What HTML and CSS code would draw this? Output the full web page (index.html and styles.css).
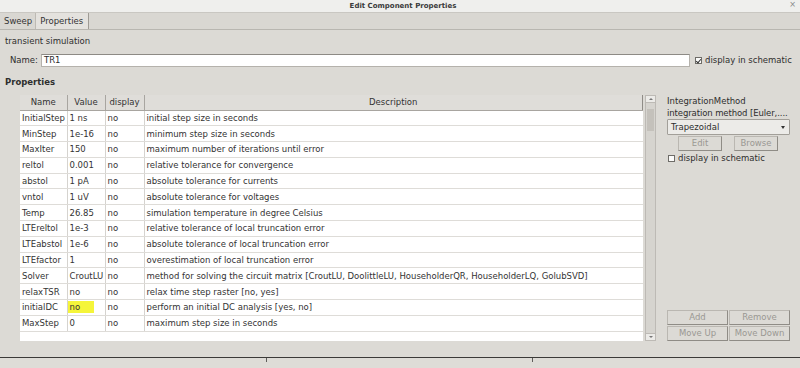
FILE: index.html
```html
<!DOCTYPE html>
<html>
<head>
<meta charset="utf-8">
<link rel="stylesheet" href="styles.css">
</head>
<body>
<div class="window">
  <div class="titlebar"><span class="title">Edit Component Properties</span><span class="close">×</span></div>
  <div class="tabs">
    <div class="tab">Sweep</div>
    <div class="tab active">Properties</div>
  </div>
  <div class="body">
    <div class="desc">transient simulation</div>
    <div class="namerow">
      <span class="lbl">Name:</span>
      <div class="input">TR1</div>
      <span class="chk checked"></span><span class="chklbl">display in schematic</span>
    </div>
    <div class="section">Properties</div>
    <div class="main">
      <div class="tablewrap">
        <table class="props">
          <thead>
            <tr><th class="c1">Name</th><th class="c2">Value</th><th class="c3">display</th><th class="c4">Description</th></tr>
          </thead>
          <tbody>
            <tr><td>InitialStep</td><td>1 ns</td><td>no</td><td>initial step size in seconds</td></tr>
            <tr><td>MinStep</td><td>1e-16</td><td>no</td><td>minimum step size in seconds</td></tr>
            <tr><td>MaxIter</td><td>150</td><td>no</td><td>maximum number of iterations until error</td></tr>
            <tr><td>reltol</td><td>0.001</td><td>no</td><td>relative tolerance for convergence</td></tr>
            <tr><td>abstol</td><td>1 pA</td><td>no</td><td>absolute tolerance for currents</td></tr>
            <tr><td>vntol</td><td>1 uV</td><td>no</td><td>absolute tolerance for voltages</td></tr>
            <tr><td>Temp</td><td>26.85</td><td>no</td><td>simulation temperature in degree Celsius</td></tr>
            <tr><td>LTEreltol</td><td>1e-3</td><td>no</td><td>relative tolerance of local truncation error</td></tr>
            <tr><td>LTEabstol</td><td>1e-6</td><td>no</td><td>absolute tolerance of local truncation error</td></tr>
            <tr><td>LTEfactor</td><td>1</td><td>no</td><td>overestimation of local truncation error</td></tr>
            <tr><td>Solver</td><td>CroutLU</td><td>no</td><td>method for solving the circuit matrix [CroutLU, DoolittleLU, HouseholderQR, HouseholderLQ, GolubSVD]</td></tr>
            <tr><td>relaxTSR</td><td>no</td><td>no</td><td>relax time step raster [no, yes]</td></tr>
            <tr><td>initialDC</td><td><span class="hl">no</span></td><td>no</td><td>perform an initial DC analysis [yes, no]</td></tr>
            <tr><td>MaxStep</td><td>0</td><td>no</td><td>maximum step size in seconds</td></tr>
          </tbody>
        </table>
      </div>
      <div class="vscroll">
        <div class="arrow up"></div>
        <div class="track"><div class="thumb"></div></div>
        <div class="arrow down"></div>
      </div>
      <div class="side">
        <div class="pname">IntegrationMethod</div>
        <div class="pdesc">integration method [Euler,....</div>
        <div class="combo"><span>Trapezoidal</span><span class="caret"></span></div>
        <div class="btnrow narrow">
          <div class="btn dis">Edit</div>
          <div class="btn dis">Browse</div>
        </div>
        <div class="sidechk"><span class="chk"></span><span class="chklbl">display in schematic</span></div>
        <div class="spacer"></div>
        <div class="btngrid">
          <div class="btn dis">Add</div>
          <div class="btn dis">Remove</div>
          <div class="btn dis">Move Up</div>
          <div class="btn dis">Move Down</div>
        </div>
      </div>
    </div>
  </div>
  <div class="bottom">
    <div class="bcell"></div>
    <div class="bcell"></div>
    <div class="bcell last"></div>
  </div>
</div>
</body>
</html>
```
FILE: styles.css
```css
* { box-sizing: border-box; }
html, body { margin: 0; padding: 0; }
body {
  width: 800px; height: 368px; overflow: hidden;
  font-family: "DejaVu Sans", sans-serif;
  font-size: 8px;
  color: #2e2e2e;
  background: #dcdad5;
}
.window { display: flex; flex-direction: column; height: 368px; }
.titlebar {
  height: 13px; background: #efefed; border-bottom: 1px solid #c9c7c2;
  display: flex; align-items: center; justify-content: center; position: relative;
}
.title { font-weight: bold; font-size: 7px; color: #3a3a3a; margin-left: 6px; }
.close { position: absolute; right: 4px; top: 0; font-size: 8px; color: #888; line-height: 10px; }
.tabs {
  height: 17px; display: flex; align-items: stretch;
  border-bottom: 1px solid #b8b6b0; background: #d9d7d2;
}
.tab { padding: 3px 3px 0 4px; font-size: 8.5px; color: #333; border-right: 1px solid #bdbab4; }
.tab.active { background: #e4e2de; border-right: 1px solid #9e9b95; padding-left: 4px; padding-right: 5px; }
.body { flex: 1; display: flex; flex-direction: column; padding: 0 0 0 5px; }
.desc { margin-top: 5px; height: 12px; line-height: 12px; font-size: 8.5px; }
.namerow { display: flex; align-items: center; margin-top: 6px; height: 14px; }
.lbl { margin-left: 5px; width: 31px; font-size: 8.5px; }
.input {
  width: 649px; height: 13px; background: #fff; border: 1px solid #b5b2ac; border-top-color: #8d8a85;
  font-size: 8.5px; line-height: 11px; padding-left: 2px;
}
.chk { width: 7px; height: 7px; border: 1px solid #6e6c68; background: #fbfbfa; display: inline-block; position: relative; }
.chk.checked::after {
  content: ""; position: absolute; left: 1px; top: 0px; width: 2px; height: 4px;
  border-right: 1px solid #333; border-bottom: 1px solid #333; transform: rotate(40deg);
}
.namerow .chk { margin-left: 5px; }
.chklbl { margin-left: 3px; font-size: 8.5px; white-space: nowrap; }
.section { font-weight: bold; font-size: 8.5px; margin-top: 9px; height: 12px; line-height: 12px; }
.main { display: flex; margin-top: 7px; height: 247px; }
.tablewrap { margin-left: 15px; width: 623px; height: 246px; background: #fff; overflow: hidden; }
.props { border-collapse: collapse; width: 623px; table-layout: fixed; font-size: 8.5px; }
.props th {
  height: 15px; background: #dfddd9; font-weight: normal; color: #333;
  border-right: 1px solid #a8a5a0; border-bottom: 1px solid #a8a5a0; text-align: center; padding: 0;
}
.props th.c1 { width: 47px; }
.props th.c2 { width: 38px; }
.props th.c3 { width: 39px; }
.props th.c4 { border-right: 1px solid #8f8c87; }
.props td {
  height: 15.8px; padding: 0 0 0 2px; white-space: nowrap; overflow: hidden;
  border-right: 1px solid #d5d3cf; border-bottom: 1px solid #dedcd8; color: #333;
}
.props td:last-child { border-right: none; padding-left: 2px; }
.hl { background: #f5f53a; display: inline-block; width: 26px; margin-left: -2px; padding-left: 2px; line-height: 12px; }
.vscroll {
  width: 11px; margin-left: 2px; height: 246px; display: flex; flex-direction: column;
  border: 1px solid #bdbab5; background: #d6d4cf;
}
.arrow { height: 7px; background: #ecebe8; border-bottom: 1px solid #bdbab5; position: relative; }
.arrow.down { border-bottom: none; border-top: 1px solid #bdbab5; }
.arrow::after { content: ""; position: absolute; left: 3px; top: 2px; border-left: 2px solid transparent; border-right: 2px solid transparent; }
.arrow.up::after { border-bottom: 2px solid #777; }
.arrow.down::after { border-top: 2px solid #777; }
.track { flex: 1; padding-top: 6px; }
.thumb { height: 22px; background: #c4c1bb; margin: 0 1px; }
.side { width: 123px; margin-left: 11px; display: flex; flex-direction: column; }
.pname { height: 12px; line-height: 12px; font-size: 8.5px; white-space: nowrap; }
.pdesc { height: 12px; line-height: 12px; font-size: 8.5px; white-space: nowrap; letter-spacing: -0.1px; }
.combo {
  margin-top: 0px; height: 16px; border: 1px solid #a29f99; background: #ecebe8;
  display: flex; justify-content: space-between; align-items: center; padding: 0 4px 0 3px; font-size: 8.5px;
  border-radius: 1px;
}
.caret { width: 0; height: 0; border-left: 2px solid transparent; border-right: 2px solid transparent; border-top: 3px solid #333; }
.btnrow { display: flex; gap: 12px; margin-top: 1px; padding-left: 11px; }
.btn {
  height: 15px; border: 1px solid #bab7b1; border-right-color: #8f8c86; border-bottom-color: #8f8c86;
  background: #dcdad5; text-align: center; line-height: 13px; font-size: 8.5px; color: #9a9893;
}
.btnrow .btn { width: 44px; }
.sidechk { display: flex; align-items: center; margin-top: 2px; }
.sidechk .chk { margin-left: 1px; }
.spacer { flex: 1; }
.btngrid { display: grid; grid-template-columns: 61px 61px; gap: 1px 1px; margin-bottom: 1px; }
.bottom {
  height: 11px; border-top: 1px solid #3b3a38; background: #dedcd7; display: flex; margin-top: auto;
}
.bcell { width: 267px; border-right: 1px solid #5e5d5a; height: 4px; }
.bcell.last { border-right: none; }
```
